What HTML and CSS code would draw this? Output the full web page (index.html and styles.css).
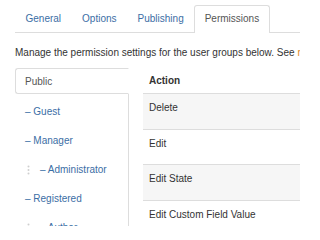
FILE: index.html
```html
<!DOCTYPE html>
<html>
<head>
<meta charset="utf-8">
<link rel="stylesheet" href="styles.css">
</head>
<body>
<div class="page">
  <ul class="tabs">
    <li class="tab"><a>General</a></li>
    <li class="tab"><a>Options</a></li>
    <li class="tab"><a>Publishing</a></li>
    <li class="tab active"><a>Permissions</a></li>
  </ul>
  <p class="desc">Manage the permission settings for the user groups below. See <span class="note">notes at the bottom.</span></p>
  <div class="perm">
    <ul class="groups">
      <li class="group active"><a>Public</a></li>
      <li class="group"><a>– Guest</a></li>
      <li class="group"><a>– Manager</a></li>
      <li class="group"><a><svg class="dots" width="3" height="10" viewBox="0 0 3 10"><circle cx="1.5" cy="1.5" r="1" fill="#cfcfcf"/><circle cx="1.5" cy="5" r="1" fill="#cfcfcf"/><circle cx="1.5" cy="8.5" r="1" fill="#cfcfcf"/></svg>– Administrator</a></li>
      <li class="group"><a>– Registered</a></li>
      <li class="group"><a><svg class="dots" width="3" height="10" viewBox="0 0 3 10"><circle cx="1.5" cy="1.5" r="1" fill="#cfcfcf"/><circle cx="1.5" cy="5" r="1" fill="#cfcfcf"/><circle cx="1.5" cy="8.5" r="1" fill="#cfcfcf"/></svg>– Author</a></li>
    </ul>
    <div class="actions">
      <div class="head">Action</div>
      <div class="row odd">Delete</div>
      <div class="row">Edit</div>
      <div class="row odd">Edit State</div>
      <div class="row">Edit Custom Field Value</div>
    </div>
  </div>
</div>
</body>
</html>
```
FILE: styles.css
```css
html, body {
  margin: 0;
  padding: 0;
  background: #fff;
  overflow: hidden;
}
body {
  font-family: "Liberation Sans", Arial, sans-serif;
  font-size: 10px;
  color: #333;
  width: 300px;
  height: 226px;
}
.page {
  padding-left: 15px;
  width: 285px;
  height: 226px;
  overflow: hidden;
}
.tabs {
  list-style: none;
  margin: 0;
  padding: 5px 0 0 0;
  display: flex;
  border-bottom: 1px solid #ddd;
  white-space: nowrap;
}
.tab a {
  display: block;
  padding: 0 9.5px;
  line-height: 26px;
  border: 1px solid transparent;
  border-bottom: none;
  border-radius: 3px 3px 0 0;
  color: #3b6ea5;
  margin-bottom: -1px;
}
.tab.active a {
  border-color: #ddd;
  background: #fff;
  color: #555;
  padding-bottom: 1px;
}
.desc {
  margin: 13px 0 0 0;
  line-height: 14px;
  white-space: nowrap;
  overflow: hidden;
}
.note {
  color: #e08a1e;
}
.perm {
  display: flex;
  margin-top: 8px;
  align-items: flex-start;
}
.groups {
  list-style: none;
  margin: 0 14px 0 0;
  padding: 0;
  width: 113px;
  flex: none;
  border-right: 1px solid #ddd;
  height: 170px;
}
.group a {
  display: flex;
  align-items: center;
  height: 29px;
  padding-left: 10px;
  color: #3b6ea5;
  white-space: nowrap;
}
.group.active a {
  height: 24px;
  border: 1px solid #ddd;
  border-right-color: #fff;
  border-radius: 3px 0 0 3px;
  padding-left: 9px;
  margin-right: -1px;
  margin-bottom: 3px;
  color: #555;
  background: #fff;
}
.dots {
  margin: 0 10px 0 2px;
}
.actions {
  flex: 1;
  min-width: 0;
}
.head {
  font-weight: bold;
  line-height: 25px;
  padding-left: 6px;
}
.row {
  border-top: 1px solid #ddd;
  height: 34.5px;
  padding-left: 6px;
  line-height: 15px;
  white-space: nowrap;
}
.row::before {
  content: "";
  display: block;
  height: 6px;
}
.row.odd {
  background: #f6f6f6;
}
```
